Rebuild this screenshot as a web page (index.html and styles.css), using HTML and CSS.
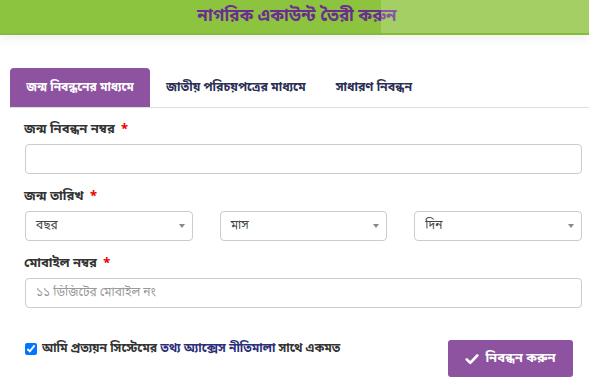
FILE: index.html
```html
<!DOCTYPE html>
<html lang="bn">
<head>
<meta charset="utf-8">
<title>নাগরিক একাউন্ট তৈরী করুন</title>
<link rel="stylesheet" href="styles.css">
</head>
<body>
<header class="topbar">
  <h1 class="title">নাগরিক একাউন্ট তৈরী করুন</h1>
  <div class="glare"></div>
</header>
<main class="page">
  <nav class="tabs">
    <a class="tab active">জন্ম নিবন্ধনের মাধ্যমে</a>
    <a class="tab">জাতীয় পরিচয়পত্রের মাধ্যমে</a>
    <a class="tab">সাধারণ নিবন্ধন</a>
  </nav>
  <form class="form">
    <label class="label">জন্ম নিবন্ধন নম্বর <span class="req">*</span></label>
    <input class="field" type="text">

    <label class="label">জন্ম তারিখ <span class="req">*</span></label>
    <div class="date-row">
      <div class="select"><span>বছর</span><i class="caret"></i></div>
      <div class="select"><span>মাস</span><i class="caret"></i></div>
      <div class="select"><span>দিন</span><i class="caret"></i></div>
    </div>

    <label class="label">মোবাইল নম্বর <span class="req">*</span></label>
    <input class="field" type="text" placeholder="১১ ডিজিটের মোবাইল নং">

    <div class="submit-row">
      <label class="agree"><input type="checkbox" checked class="check"><span>আমি প্রত্যয়ন সিস্টেমের <a class="link">তথ্য অ্যাক্সেস নীতিমালা</a> সাথে একমত</span></label>
      <button type="button" class="btn"><svg class="tick" viewBox="0 0 16 16" width="14" height="14"><path d="M2 8.5 L6 12.5 L14 4" fill="none" stroke="#fff" stroke-width="3" stroke-linecap="round" stroke-linejoin="round"/></svg>নিবন্ধন করুন</button>
    </div>
  </form>
</main>
</body>
</html>
```

FILE: styles.css
```css
* { box-sizing: border-box; }
html, body { margin: 0; padding: 0; background: #fff; }
body {
  font-family: "Noto Sans Bengali", "Lohit Bengali", "FreeSans", "Noto Sans", "DejaVu Sans", sans-serif;
  color: #333;
  font-size: 14px;
  width: 589px;
  height: 390px;
  overflow: hidden;
}
.topbar {
  position: relative;
  height: 35px;
  background: #8cc33f;
  border-bottom: 2px solid #86bb3a;
  box-shadow: 0 4px 10px rgba(0,0,0,0.06);
  display: flex;
  align-items: center;
  justify-content: center;
}
.title {
  margin: 0;
  font-size: 17px;
  font-weight: bold;
  color: #6b2e8f;
  padding-left: 5px;
}
.glare {
  position: absolute;
  top: 0;
  left: 381px;
  right: 0;
  height: 33px;
  background: rgba(255,255,255,0.2);
}
.page { padding-top: 33px; }
.tabs {
  display: flex;
  margin-left: 10px;
  height: 40px;
  border-bottom: 1px solid #ddd;
}
.tab {
  display: flex;
  align-items: center;
  padding: 0 14px 0 16px;
  font-weight: bold;
  font-size: 12.3px;
  color: #2b2e55;
  border-radius: 4px 4px 0 0;
}
.tab.active {
  background: #8e53a0;
  color: #fff;
  width: 140px;
  justify-content: center;
  padding: 0;
  font-size: 12px;
}
.form {
  display: flex;
  flex-direction: column;
  padding: 0 7px 0 25px;
}
.label {
  display: block;
  margin: 12px 0 4px -1px;
  line-height: 20px;
  font-weight: bold;
  font-size: 13px;
  color: #333;
}
.field + .label, .date-row + .label { margin-top: 13px; }
.req { color: #e00; margin-left: 3px; }
.field {
  height: 30px;
  width: 100%;
  border: 1px solid #ccc;
  border-radius: 4px;
  padding: 0 10px;
  font: inherit;
  font-size: 12px;
  color: #555;
}
.field::placeholder { color: #999; }
.date-row {
  display: grid;
  grid-template-columns: repeat(3, 1fr);
  column-gap: 27px;
}
.select {
  height: 30px;
  border: 1px solid #ccc;
  border-radius: 4px;
  display: flex;
  align-items: center;
  justify-content: space-between;
  padding: 0 7px 0 10px;
  font-size: 12px;
  color: #444;
}
.caret {
  width: 0; height: 0;
  border-left: 3px solid transparent;
  border-right: 3px solid transparent;
  border-top: 4px solid #888;
}
.submit-row {
  display: flex;
  justify-content: space-between;
  align-items: flex-start;
  margin-top: 32px;
  padding-right: 9px;
}
.agree {
  display: flex;
  align-items: center;
  font-weight: bold;
  font-size: 12.1px;
  color: #333;
  margin-top: 1px;
}
.check { margin: 0 5px 0 0; width: 12px; height: 12px; }
.link { color: #2b2e7a; }
.btn {
  height: 37px;
  width: 125px;
  background: #8e53a0;
  border: 0;
  border-radius: 3px;
  color: #fff;
  font: inherit;
  font-weight: bold;
  font-size: 13px;
  display: flex;
  align-items: center;
  justify-content: center;
  gap: 6px;
}
```
